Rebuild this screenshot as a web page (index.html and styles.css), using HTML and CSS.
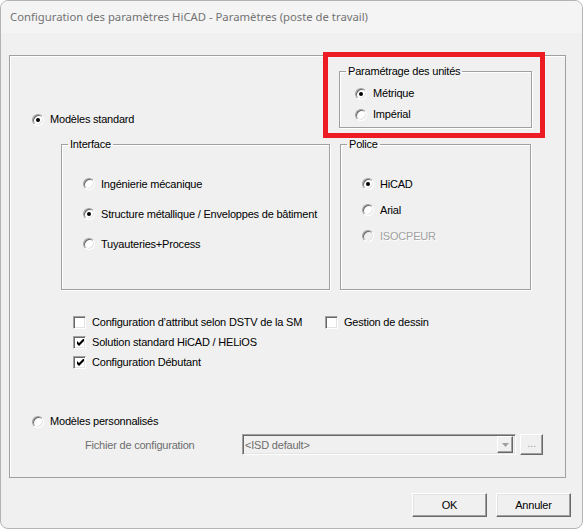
FILE: index.html
```html
<!DOCTYPE html>
<html>
  <head>
    <meta charset="utf-8">
    <title>Configuration des paramètres HiCAD</title>
    <link rel="stylesheet" href="styles.css">
  </head>
  <body>
    <div class="window">
      <div class="titlebar">Configuration des paramètres HiCAD - Paramètres (poste de travail)</div>

      <div class="client">
        <div class="frame">

          <div class="top-row">
            <label class="option std"><span class="radio on"></span>Modèles standard</label>

            <fieldset class="group units">
              <legend>Paramétrage des unités</legend>
              <label class="option row"><span class="radio on"></span>Métrique</label>
              <label class="option row"><span class="radio"></span>Impérial</label>
            </fieldset>
          </div>

          <div class="group-row">
            <fieldset class="group interface">
              <legend>Interface</legend>
              <label class="option row"><span class="radio"></span>Ingénierie mécanique</label>
              <label class="option row"><span class="radio on"></span>Structure métallique / Enveloppes de bâtiment</label>
              <label class="option row"><span class="radio"></span>Tuyauteries+Process</label>
            </fieldset>

            <fieldset class="group police">
              <legend>Police</legend>
              <label class="option row"><span class="radio on"></span>HiCAD</label>
              <label class="option row"><span class="radio"></span>Arial</label>
              <label class="option row disabled"><span class="radio"></span>ISOCPEUR</label>
            </fieldset>
          </div>

          <div class="checks">
            <label class="option"><span class="check"></span>Configuration d’attribut selon DSTV de la SM</label>
            <label class="option"><span class="check"></span>Gestion de dessin</label>
            <label class="option"><span class="check on"><svg viewBox="0 0 7 7" width="7" height="7"><polygon points="0,2 2,4 7,-1 7,2 2,7 0,5" fill="#000"/></svg></span>Solution standard HiCAD / HELiOS</label>
            <span></span>
            <label class="option"><span class="check on"><svg viewBox="0 0 7 7" width="7" height="7"><polygon points="0,2 2,4 7,-1 7,2 2,7 0,5" fill="#000"/></svg></span>Configuration Débutant</label>
          </div>

          <label class="option custom"><span class="radio"></span>Modèles personnalisés</label>

          <div class="file-row">
            <span class="file-label">Fichier de configuration</span>
            <div class="combo">
              <span class="combo-text">&lt;ISD default&gt;</span>
              <span class="combo-btn"><svg viewBox="0 0 7 4" width="7" height="4"><polygon points="0,0 7,0 3.5,4" fill="#a0a0a0"/></svg></span>
            </div>
            <span class="browse">...</span>
          </div>

        </div>

        <div class="buttons">
          <button class="btn">OK</button>
          <button class="btn">Annuler</button>
        </div>
      </div>

      <div class="highlight"></div>
    </div>
  </body>
</html>
```

FILE: styles.css
```css
* {
  margin: 0;
  padding: 0;
  box-sizing: border-box;
}

body {
  background: #fff;
  font-family: "Liberation Sans", Arial, sans-serif;
  font-size: 11px;
  letter-spacing: -0.2px;
  color: #000;
}

.window {
  position: relative;
  width: 583px;
  height: 529px;
  border: 1px solid #b4b4b4;
  border-radius: 8px;
  background: #f0f0f0;
  overflow: hidden;
}

.titlebar {
  height: 32px;
  line-height: 32px;
  padding-left: 9px;
  background: #f4f4f4;
  font-family: "Noto Sans", sans-serif;
  font-size: 11.3px;
  letter-spacing: 0;
  color: #737373;
}

.client {
  padding: 22px 0 0 8px;
}

/* etched frames */
.frame {
  width: 557px;
  height: 423px;
  border: 1px solid #a0a0a0;
  box-shadow: inset 1px 1px 0 #fff;
  display: flex;
  flex-direction: column;
}

.group {
  border: 1px solid #a0a0a0;
  box-shadow: inset 1px 1px 0 #fff, 1px 1px 0 #fff;
}

.group legend {
  margin-left: 6px;
  padding: 0 2px 0 2px;
  line-height: 13px;
}

/* radio + checkbox rows */
.option {
  display: flex;
  align-items: center;
  gap: 6px;
  height: 13px;
  line-height: 13px;
  white-space: nowrap;
}

.radio {
  position: relative;
  flex: none;
  width: 12px;
  height: 12px;
  border-radius: 50%;
  background: #fff;
  border: 1px solid;
  border-color: #a0a0a0 #fff #fff #a0a0a0;
  box-shadow: inset 1px 1px 0 #696969, inset -1px -1px 0 #e3e3e3;
}

.radio.on::after {
  content: "";
  position: absolute;
  left: 3px;
  top: 3px;
  width: 4px;
  height: 4px;
  border-radius: 50%;
  background: #000;
}

.disabled {
  color: #a0a0a0;
  text-shadow: 1px 1px 0 #fff;
}

.disabled .radio {
  background: #f0f0f0;
}

.check {
  flex: none;
  display: flex;
  align-items: center;
  justify-content: center;
  width: 13px;
  height: 13px;
  background: #fff;
  border: 1px solid;
  border-color: #a0a0a0 #fff #fff #a0a0a0;
  box-shadow: inset 1px 1px 0 #696969, inset -1px -1px 0 #e3e3e3;
  padding-top: 1px;
  padding-left: 1px;
}

/* top */
.top-row {
  display: flex;
  margin-top: 9px;
  height: 63px;
}

.std {
  align-self: flex-end;
  margin: 0 0 2px 22px;
}

.units {
  margin-left: auto;
  margin-right: 33px;
  width: 193px;
  height: 63px;
  padding-top: 5px;
}

.units .row {
  height: 21px;
  margin-left: 15px;
}

.group-row {
  display: flex;
  gap: 10px;
  margin: 10px 0 0 51px;
}

.interface {
  width: 269px;
  height: 152px;
  padding-top: 18px;
}

.interface .row {
  height: 30px;
  margin-left: 21px;
}

.police {
  width: 191px;
  height: 152px;
  padding-top: 20px;
}

.police .row {
  height: 26px;
  margin-left: 21px;
}

.checks {
  display: grid;
  grid-template-columns: 252px auto;
  grid-auto-rows: 20px;
  margin: 22px 0 0 63px;
}

.checks .option {
  height: 20px;
}

.custom {
  margin: 43px 0 0 22px;
}

/* file row */
.file-row {
  display: flex;
  align-items: center;
  margin: 6px 0 0 75px;
  height: 21px;
}

.file-label {
  width: 157px;
  color: #6d6d6d;
}

.combo {
  display: flex;
  align-items: center;
  justify-content: space-between;
  width: 274px;
  height: 21px;
  border: 1px solid;
  border-color: #a0a0a0 #fff #fff #a0a0a0;
  box-shadow: inset 1px 1px 0 #696969, inset -1px -1px 0 #e3e3e3;
  padding: 0 2px 0 2px;
  color: #6d6d6d;
}

.combo-btn {
  display: flex;
  align-items: center;
  justify-content: center;
  width: 16px;
  height: 17px;
  border: 1px solid;
  border-color: #fff #696969 #696969 #fff;
  box-shadow: inset -1px -1px 0 #a0a0a0;
}

.browse {
  display: flex;
  align-items: center;
  justify-content: center;
  margin-left: 4px;
  width: 23px;
  height: 21px;
  border: 1px solid;
  border-color: #fff #696969 #696969 #fff;
  box-shadow: inset -1px -1px 0 #a0a0a0;
  color: #a0a0a0;
  padding-bottom: 3px;
}

/* dialog buttons */
.buttons {
  display: flex;
  justify-content: flex-end;
  gap: 9px;
  margin: 15px 11px 0 0;
}

.btn {
  width: 75px;
  height: 24px;
  font: inherit;
  letter-spacing: inherit;
  background: #f0f0f0;
  border: 1px solid;
  border-color: #fff #696969 #696969 #fff;
  box-shadow: inset -1px -1px 0 #a0a0a0, inset 1px 1px 0 #e3e3e3;
  color: #000;
}

/* red annotation box */
.highlight {
  position: absolute;
  left: 322px;
  top: 51px;
  width: 222px;
  height: 86px;
  border: 5px solid #ed1c24;
}
```
